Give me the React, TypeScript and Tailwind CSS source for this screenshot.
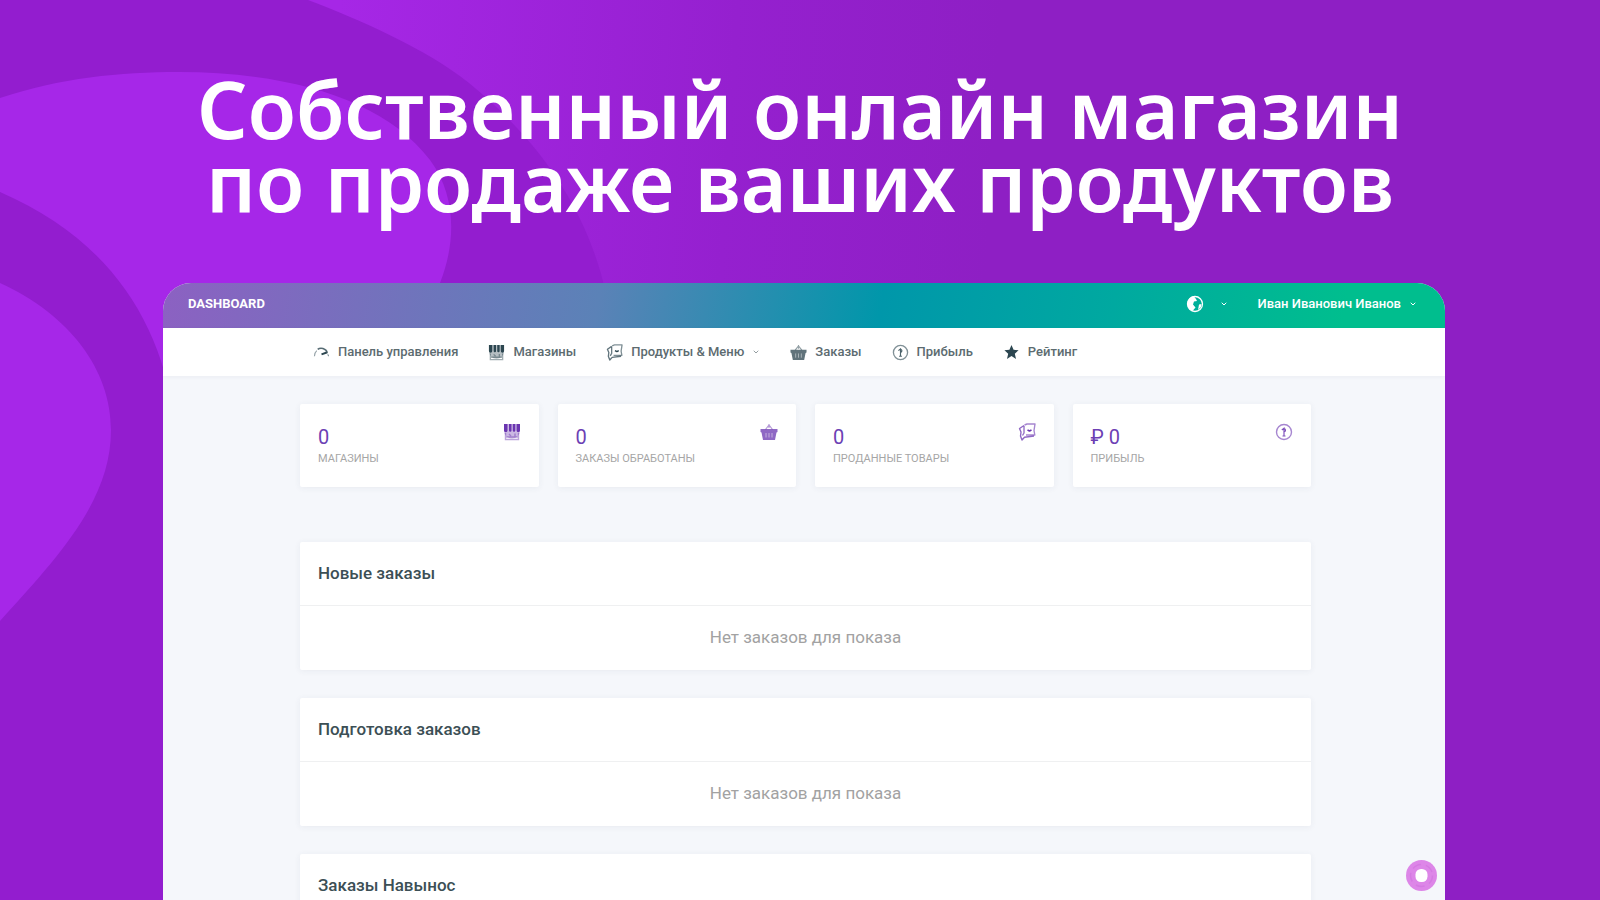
import React from 'react';
import { ChevronDown } from 'lucide-react';

type IconProps = { className?: string };

const GaugeIcon: React.FC<IconProps> = ({ className }) => (
  <svg viewBox="0 0 18 18" fill="none" stroke="currentColor" className={className}>
    <path d="M1.500 13c0-2.500.8-4.500 2.500-6" strokeWidth="1.200" opacity="0.5" />
    <path d="M5 5.800C6.500 4.500 8.500 4.200 10.500 4.800c2.500.8 4.300 2.500 4.500 5" strokeWidth="1.800" opacity="0.8" />
    <path d="M9 11l5.500-2" strokeWidth="2" />
    <path d="M15.500 11c.6.6.9 1.200 1 2" strokeWidth="1.200" opacity="0.6" />
  </svg>
);

const StoreIcon: React.FC<IconProps> = ({ className }) => (
  <svg viewBox="0 0 18 18" className={className}>
    <path d="M1 1h16v6.500a1.700 1.700 0 0 1-16 0z" fill="currentColor" opacity="0.35" />
    <path d="M1 1h3.500v6.500a1.700 1.700 0 0 1-3.500 0zM6 1h2.500v6.500a1.200 1.200 0 0 1-2.500 0zM9.800 1h2.500v6.500a1.200 1.200 0 0 1-2.500 0zM13.600 1H17v6.500a1.700 1.700 0 0 1-3.400 0z" fill="currentColor" />
    <path d="M2.500 10v6.500h13V10M2.500 14h13M6 11l2 2M12 10.500v3" fill="none" stroke="currentColor" strokeWidth="1.400" opacity="0.45" />
  </svg>
);

const ProductIcon: React.FC<IconProps> = ({ className }) => (
  <svg viewBox="0 0 18 18" fill="none" stroke="currentColor" strokeWidth="1.400" strokeLinejoin="round" className={className}>
    <path d="M6.500 2L9 1h8l-1 6.500.8 4.500H8" opacity="0.6" />
    <path d="M6 2.500l-4.500 3L3 9l-.5 4L4 17l2.500-2.800L16 13" opacity="0.75" />
    <path d="M6 3v7l-1.500 2.500" opacity="0.7" />
    <path d="M9.500 7l2 1 2-1" strokeWidth="1.600" />
  </svg>
);

const BasketIcon: React.FC<IconProps> = ({ className }) => (
  <svg viewBox="0 0 18 18" className={className}>
    <path d="M9 1v4M5.500 6.500L9 2l3.500 4.500" fill="none" stroke="currentColor" strokeWidth="1.200" opacity="0.5" />
    <path d="M.5 6h17v3l-1 .5L15 17H3L1.500 9.500l-1-.5z" fill="currentColor" opacity="0.75" />
    <path d="M6 10v4.500M9 10v4.500M12 10v4.500" stroke="#fff" strokeWidth="0.800" opacity="0.6" />
  </svg>
);

const CoinIcon: React.FC<IconProps> = ({ className }) => (
  <svg viewBox="0 0 18 18" fill="none" stroke="currentColor" className={className}>
    <circle cx="9" cy="9" r="7.500" strokeWidth="1.400" opacity="0.6" />
    <path d="M6.800 7L9 5.200V13M9 5.500c2 .5 2 3 0 3.500M7.500 13h3" strokeWidth="1.200" opacity="0.85" />
  </svg>
);

const StarIcon: React.FC<IconProps> = ({ className }) => (
  <svg viewBox="0 0 18 18" className={className}>
    <path d="M9 1l2.200 5.200 5.300.4-4 3.600 1.300 5.600L9 12.700l-4.800 3.100 1.300-5.600-4-3.600 5.300-.4z" fill="currentColor" />
  </svg>
);

const GlobeIcon: React.FC<IconProps> = ({ className }) => (
  <svg viewBox="0 0 18 18" className={className}>
    <circle cx="9" cy="9" r="7.500" fill="none" stroke="#fff" strokeWidth="1.300" />
    <path d="M8 1.500C3.500 2 1.500 5 1.500 9c0 3.500 2 6 5 7l3-3.500-2.500-3 1-3 3-.5-1-2z" fill="#fff" />
    <path d="M13 9.500l2.500-.5-.5 3-3 3z" fill="#fff" />
  </svg>
);

const navItems = [
  { label: 'Панель управления', icon: GaugeIcon },
  { label: 'Магазины', icon: StoreIcon },
  { label: 'Продукты & Меню', icon: ProductIcon, menu: true },
  { label: 'Заказы', icon: BasketIcon },
  { label: 'Прибыль', icon: CoinIcon },
  { label: 'Рейтинг', icon: StarIcon },
];

const stats = [
  { value: '0', label: 'Магазины', icon: StoreIcon },
  { value: '0', label: 'Заказы обработаны', icon: BasketIcon },
  { value: '0', label: 'Проданные товары', icon: ProductIcon },
  { value: '₽ 0', label: 'Прибыль', icon: CoinIcon },
];

const orderGroups = ['Новые заказы', 'Подготовка заказов', 'Заказы Навынос'];

const Backdrop: React.FC = () => (
  <svg
    viewBox="0 0 1600 900"
    preserveAspectRatio="xMinYMin slice"
    className="absolute inset-0 h-full w-full"
    aria-hidden="true"
  >
    <defs>
      <linearGradient id="glow" gradientUnits="userSpaceOnUse" x1="340" y1="0" x2="1000" y2="40">
        <stop offset="0" stopColor="#a627e6" />
        <stop offset="0.600" stopColor="#9520cf" />
        <stop offset="1" stopColor="#8e1fc4" />
      </linearGradient>
    </defs>
    <rect width="1600" height="900" fill="url(#glow)" />
    <path d="M0 0H308C360 20 425 48 469 83C545 145 600 225 612 330V900H0z" fill="#931dcf" />
    <path d="M0 98C60 78 120 72 179 72C290 72 385 100 430 160C458 198 455 245 440 283V420H175C160 320 110 240 0 192z" fill="#a627e8" />
    <path d="M0 283C70 315 111 370 111 430C111 500 60 555 0 621z" fill="#a627e8" />
  </svg>
);

const OrdersCard: React.FC<{ title: string }> = ({ title }) => (
  <section className="rounded-xs bg-white shadow-[0_1px_6px_rgba(60,70,100,0.07)]">
    <h2 className="flex h-16 items-center border-b border-[#eff0f1] px-[18px] text-[17px] font-medium text-[#3c4f55]">
      {title}
    </h2>
    <p className="flex h-16 items-center justify-center text-[17px] text-[#a2a2a2]">Нет заказов для показа</p>
  </section>
);

export default function App() {
  return (
    <div className="relative h-screen overflow-hidden bg-[#8e1fc4] font-['Roboto','Noto_Sans',sans-serif]">
      <Backdrop />

      <div className="relative flex h-full flex-col">
        <h1 className="pt-[72px] text-center font-['Noto_Sans',sans-serif] text-[79px] leading-[73px] font-semibold text-white">
          Собственный онлайн магазин
          <br />
          по продаже ваших продуктов
        </h1>

        <div className="relative mt-[65px] mr-[155px] ml-[163px] flex-1 overflow-hidden rounded-t-[28px] bg-[#f5f7fb]">
          {/* Шапка */}
          <header className="flex h-[45px] items-center justify-between bg-[linear-gradient(100deg,#8c61c2_0%,#5b82b7_34%,#0097aa_56%,#00a9a0_74%,#00be8e_92%)] pr-7 pb-[3px] pl-[25px] text-white">
            <span className="text-[13px] font-bold">DASHBOARD</span>
            <div className="flex items-center gap-[29px]">
              <button type="button" aria-label="Язык" className="flex items-center gap-4">
                <GlobeIcon className="size-[18px]" />
                <ChevronDown className="size-2" strokeWidth={3} />
              </button>
              <button type="button" className="flex items-center gap-2 text-[13px] font-medium">
                Иван Иванович Иванов
                <ChevronDown className="size-2" strokeWidth={3} />
              </button>
            </div>
          </header>

          {/* Меню */}
          <nav className="flex h-12 items-center gap-[30px] bg-white pl-[150px] text-[13px] font-medium text-[#5c6b70] shadow-[0_1px_4px_rgba(60,70,100,0.06)]">
            {navItems.map(({ label, icon: Icon, menu }) => (
              <a key={label} href="#" className="flex items-center gap-2 whitespace-nowrap">
                <Icon className="size-[17px] text-[#2c4650]" />
                {label}
                {menu && <ChevronDown className="size-2" />}
              </a>
            ))}
          </nav>

          <main className="pt-7 pr-[134px] pl-[137px]">
            <div className="grid grid-cols-4 gap-[19px]">
              {stats.map(({ value, label, icon: Icon }) => (
                <div
                  key={label}
                  className="flex h-[83px] items-start justify-between rounded-xs bg-white px-[18px] pt-[19px] shadow-[0_1px_6px_rgba(60,70,100,0.07)]"
                >
                  <div>
                    <div className="text-xl leading-7 text-[#6c3fb4]">{value}</div>
                    <div className="text-[11px] leading-4 text-[#a6a6a6] uppercase">{label}</div>
                  </div>
                  <Icon className="size-[18px] text-[#6a35b0]" />
                </div>
              ))}
            </div>

            <div className="mt-[55px] flex flex-col gap-7">
              {orderGroups.map((title) => (
                <OrdersCard key={title} title={title} />
              ))}
            </div>
          </main>

          {/* Кнопка поддержки */}
          <button
            type="button"
            aria-label="Поддержка"
            className="absolute right-2 bottom-[9px] flex size-[31px] items-center justify-center rounded-full bg-[#dd86e8]"
          >
            <svg viewBox="0 0 31 31" className="size-full">
              <circle cx="15.500" cy="15.500" r="11" fill="none" stroke="#d57ae2" strokeWidth="1.500" strokeDasharray="9 5" />
              <rect x="9.500" y="9" width="12" height="13" rx="5.500" fill="#fff" />
            </svg>
          </button>
        </div>
      </div>
    </div>
  );
}
